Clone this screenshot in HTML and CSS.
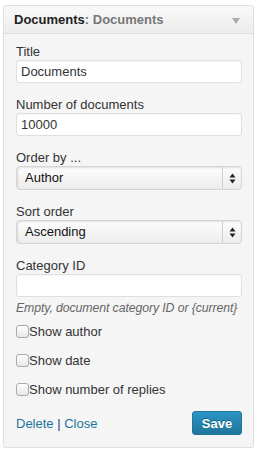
FILE: index.html
```html
<!DOCTYPE html>
<html lang="en">
<head>
    <meta charset="UTF-8">
    <link rel="stylesheet" href="styles.css">
</head>
<body>
    <div class="widget">
        <div class="widget-top">
            <h4>Documents<span class="in-widget-title">: Documents</span></h4>
            <span class="widget-toggle"></span>
        </div>

        <div class="widget-inside">
            <div class="field">
                <label for="title">Title</label>
                <input id="title" type="text" value="Documents">
            </div>

            <div class="field">
                <label for="number">Number of documents</label>
                <input id="number" type="text" value="10000">
            </div>

            <div class="field">
                <label>Order by ...</label>
                <div class="select">
                    <span class="select-value">Author</span>
                    <span class="select-arrows">
                        <svg width="7" height="11" viewBox="0 0 7 11"><path d="M3.5 0.5 L6.5 4.5 H0.5 Z M3.5 10.5 L0.5 6.5 H6.5 Z" fill="#222"/></svg>
                    </span>
                </div>
            </div>

            <div class="field">
                <label>Sort order</label>
                <div class="select">
                    <span class="select-value">Ascending</span>
                    <span class="select-arrows">
                        <svg width="7" height="11" viewBox="0 0 7 11"><path d="M3.5 0.5 L6.5 4.5 H0.5 Z M3.5 10.5 L0.5 6.5 H6.5 Z" fill="#222"/></svg>
                    </span>
                </div>
            </div>

            <div class="field field-last">
                <label for="category">Category ID</label>
                <input id="category" type="text" value="">
                <p class="description">Empty, document category ID or {current}</p>
            </div>

            <div class="checks">
                <label class="check"><input type="checkbox">Show author</label>
                <label class="check"><input type="checkbox">Show date</label>
                <label class="check"><input type="checkbox">Show number of replies</label>
            </div>

            <div class="widget-control-actions">
                <div class="links">
                    <a href="#">Delete</a> <span class="sep">|</span> <a href="#">Close</a>
                </div>
                <button class="button-primary">Save</button>
            </div>
        </div>
    </div>
</body>
</html>
```

FILE: styles.css
```css
body {
    margin: 0;
    padding: 5px 4px 0 3px;
    background-color: #fff;
    font-family: "Liberation Sans", Arial, sans-serif;
    font-size: 13px;
    color: #333;
}

.widget {
    border: 1px solid #dfdfdf;
    border-radius: 3px;
    background-color: #f5f5f5;
    box-shadow: 0 1px 1px rgba(0, 0, 0, 0.06);
}

.widget-top {
    display: flex;
    align-items: center;
    justify-content: space-between;
    height: 27px;
    padding: 0 13px 0 10px;
    background: linear-gradient(to bottom, #f9f9f9, #ececec);
    border-bottom: 1px solid #dfdfdf;
    border-radius: 3px 3px 0 0;
}

.widget-top h4 {
    margin: 0;
    font-size: 13px;
    font-weight: bold;
    color: #222;
}

.in-widget-title {
    color: #777;
}

.in-widget-title::first-letter {
    color: #222;
}

.widget-toggle {
    width: 0;
    height: 0;
    border-left: 4px solid transparent;
    border-right: 4px solid transparent;
    border-top: 6px solid #aaa;
    margin-top: 2px;
}

.widget-inside {
    padding: 10px 11px 12px 12px;
}

.field {
    margin-bottom: 14px;
}

.field-last {
    margin-bottom: 7px;
}

.field label {
    display: block;
    line-height: 16px;
}

.field input[type="text"] {
    display: block;
    box-sizing: border-box;
    width: 100%;
    height: 23px;
    margin: 0;
    padding: 2px 4px;
    border: 1px solid #dfdfdf;
    border-radius: 3px;
    background-color: #fff;
    box-shadow: inset 0 1px 2px rgba(0, 0, 0, 0.04);
    font-family: "Liberation Sans", Arial, sans-serif;
    font-size: 13px;
    color: #333;
}

.select {
    display: flex;
    align-items: stretch;
    box-sizing: border-box;
    height: 24px;
    border: 1px solid #d4d4d4;
    border-radius: 4px;
    background: linear-gradient(to bottom, #fdfdfd, #ececec);
    box-shadow: inset 1px 1px 2px rgba(0, 0, 0, 0.12);
}

.select-value {
    flex: 1;
    padding-left: 8px;
    line-height: 22px;
    color: #111;
}

.select-arrows {
    display: flex;
    align-items: center;
    justify-content: center;
    width: 18px;
    border-left: 1px solid #d0d0d0;
}

.description {
    margin: 3px 0 0;
    font-size: 12.3px;
    font-style: italic;
    color: #666;
    line-height: 16px;
    white-space: nowrap;
    letter-spacing: -0.1px;
}

.check {
    display: flex;
    align-items: center;
    height: 16px;
    margin-bottom: 13px;
}

.check input {
    box-sizing: border-box;
    width: 13px;
    height: 13px;
    margin: 0;
    appearance: none;
    border: 1px solid #aaa;
    border-radius: 3px;
    background: linear-gradient(to bottom, #fff, #e6e6e6);
}

.widget-control-actions {
    display: flex;
    align-items: center;
    justify-content: space-between;
    margin-top: 14px;
}

.links a {
    color: #21759b;
    text-decoration: none;
}

.links .sep {
    color: #1d3b7a;
}

.button-primary {
    width: 50px;
    height: 24px;
    padding: 0;
    border: 1px solid #21759b;
    border-radius: 3px;
    background: linear-gradient(to bottom, #2a95c5, #21759b);
    color: #fff;
    font-family: "Liberation Sans", Arial, sans-serif;
    font-size: 13px;
    font-weight: bold;
    text-shadow: 0 -1px 0 rgba(0, 0, 0, 0.3);
}
```
